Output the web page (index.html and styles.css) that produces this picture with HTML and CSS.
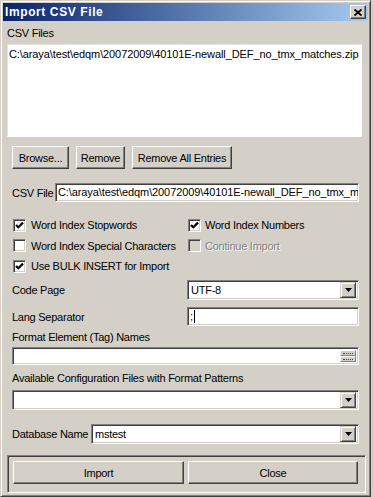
FILE: index.html
```html
<!DOCTYPE html>
<html lang="en">

<head>
    <meta charset="UTF-8">
    <title>Import CSV File</title>
    <link rel="stylesheet" href="styles.css">
</head>

<body>
    <div class="window">
        <div class="titlebar">
            <span class="title">Import CSV File</span>
            <span class="close-btn">
                <svg width="8" height="7" viewBox="0 0 8 7"><path d="M0.5 0.5 L7.5 6.5 M7.5 0.5 L0.5 6.5" stroke="#000" stroke-width="1.8" fill="none"/></svg>
            </span>
        </div>

        <div class="content">
            <div class="label">CSV Files</div>
            <div class="listbox">
                <div class="list-item path-text">C:\araya\test\edqm\20072009\40101E-newall_DEF_no_tmx_matches.zip</div>
            </div>

            <div class="button-row">
                <div class="btn browse-btn">Browse...</div>
                <div class="btn remove-btn">Remove</div>
                <div class="btn remove-all-btn">Remove All Entries</div>
            </div>

            <div class="field-row csv-row">
                <span class="field-label csv-label">CSV File</span>
                <div class="textbox csv-input path-text">C:\araya\test\edqm\20072009\40101E-newall_DEF_no_tmx_matches.zip</div>
            </div>

            <div class="check-grid">
                <div class="check"><span class="box checked"><svg width="9" height="9" viewBox="0 0 9 9"><polyline points="1,4 3.3,6.3 8,1.6" stroke="#000" stroke-width="2.2" fill="none"/></svg></span>Word Index Stopwords</div>
                <div class="check"><span class="box checked"><svg width="9" height="9" viewBox="0 0 9 9"><polyline points="1,4 3.3,6.3 8,1.6" stroke="#000" stroke-width="2.2" fill="none"/></svg></span>Word Index Numbers</div>
                <div class="check"><span class="box"></span>Word Index Special Characters</div>
                <div class="check disabled"><span class="box"></span>Continue Import</div>
                <div class="check"><span class="box checked"><svg width="9" height="9" viewBox="0 0 9 9"><polyline points="1,4 3.3,6.3 8,1.6" stroke="#000" stroke-width="2.2" fill="none"/></svg></span>Use BULK INSERT for Import</div>
            </div>

            <div class="field-row code-row">
                <span class="field-label wide-label">Code Page</span>
                <div class="combo half-combo">
                    <span class="combo-text">UTF-8</span>
                    <span class="arrow-btn"><svg width="7" height="4" viewBox="0 0 7 4"><path d="M0 0 H7 L3.5 4 Z" fill="#000"/></svg></span>
                </div>
            </div>

            <div class="field-row lang-row">
                <span class="field-label wide-label">Lang Separator</span>
                <div class="textbox lang-input">;<span class="caret"></span></div>
            </div>

            <div class="label sub-label format-label">Format Element (Tag) Names</div>
            <div class="textbox format-input">
                <span class="spin">
                    <span class="spin-half"><span class="dots"></span></span>
                    <span class="spin-half"><span class="dots"></span></span>
                </span>
            </div>

            <div class="label sub-label avail-label">Available Configuration Files with Format Patterns</div>
            <div class="combo full-combo">
                <span class="combo-text"></span>
                <span class="arrow-btn"><svg width="7" height="4" viewBox="0 0 7 4"><path d="M0 0 H7 L3.5 4 Z" fill="#000"/></svg></span>
            </div>

            <div class="field-row db-row">
                <span class="field-label db-label">Database Name</span>
                <div class="combo db-combo">
                    <span class="combo-text">mstest</span>
                    <span class="arrow-btn"><svg width="7" height="4" viewBox="0 0 7 4"><path d="M0 0 H7 L3.5 4 Z" fill="#000"/></svg></span>
                </div>
            </div>

            <div class="bottom-panel">
                <div class="btn import-btn">Import</div>
                <div class="btn close-dialog-btn">Close</div>
            </div>
        </div>
    </div>
</body>

</html>
```

FILE: styles.css
```css
body {
    margin: 0;
    background-color: #d4d0c8;
    font-family: "Liberation Sans", Arial, sans-serif;
    font-size: 11px;
    letter-spacing: -0.25px;
    color: #000;
}

.window {
    width: 371px;
    height: 497px;
    box-sizing: border-box;
    border: 1px solid;
    border-color: #d4d0c8 #404040 #404040 #d4d0c8;
    box-shadow: inset 1px 1px #fff, inset -1px -1px #808080;
    padding: 2px;
    background-color: #d4d0c8;
    overflow: hidden;
}

.titlebar {
    height: 18px;
    display: flex;
    align-items: center;
    justify-content: space-between;
    background: linear-gradient(to right, #0a246a, #a6caf0);
    padding: 0 2px 0 2px;
}

.title {
    color: #fff;
    font-weight: bold;
    font-size: 12px;
    letter-spacing: 0.6px;
}

.close-btn {
    width: 16px;
    height: 14px;
    box-sizing: border-box;
    display: flex;
    align-items: center;
    justify-content: center;
    background-color: #d4d0c8;
    border: 1px solid;
    border-color: #fff #404040 #404040 #fff;
    box-shadow: inset -1px -1px #808080;
}

.content {
    padding: 5px 0 0 4px;
}

.label {
    height: 14px;
    line-height: 14px;
    white-space: nowrap;
}

.sub-label {
    margin-left: 5px;
}

.path-text {
    letter-spacing: -0.1px;
}

.listbox {
    margin-top: 4px;
    width: 355px;
    height: 93px;
    box-sizing: border-box;
    background-color: #fff;
    border: 1px solid;
    border-color: #e4e2dc #fff #fff #e4e2dc;
    padding: 3px 0 3px 1px;
}

.list-item {
    line-height: 13px;
    white-space: nowrap;
}

.button-row {
    margin: 9px 0 0 5px;
    display: flex;
    gap: 7px;
}

.btn {
    height: 23px;
    box-sizing: border-box;
    display: flex;
    align-items: center;
    justify-content: center;
    background-color: #d4d0c8;
    border: 1px solid;
    border-color: #fff #404040 #404040 #fff;
    box-shadow: inset -1px -1px #808080;
    white-space: nowrap;
}

.browse-btn { width: 57px; }
.remove-btn { width: 49px; }
.remove-all-btn { width: 100px; }

.field-row {
    margin-left: 5px;
    display: flex;
    align-items: center;
}

.field-label {
    white-space: nowrap;
}

.csv-row { margin-top: 14px; }
.csv-label { width: 43px; }
.wide-label { width: 175px; }
.db-label { width: 79px; }

.textbox,
.combo {
    box-sizing: border-box;
    background-color: #fff;
    border: 1px solid;
    border-color: #808080 #fff #fff #808080;
    box-shadow: inset 1px 1px #404040, inset -1px -1px #d4d0c8;
    white-space: nowrap;
    overflow: hidden;
}

.textbox {
    padding: 0 2px;
    line-height: 17px;
}

.csv-input {
    width: 304px;
    height: 19px;
}

.check-grid {
    margin: 13px 0 0 5px;
    display: grid;
    grid-template-columns: 176px 1fr;
    grid-template-rows: 20px 21px 20px;
}

.check {
    display: flex;
    align-items: center;
    white-space: nowrap;
}

.box {
    width: 13px;
    height: 13px;
    box-sizing: border-box;
    margin: 0 5px 0 1px;
    display: flex;
    align-items: center;
    justify-content: center;
    background-color: #fff;
    border: 1px solid;
    border-color: #808080 #fff #fff #808080;
    box-shadow: inset 1px 1px #404040, inset -1px -1px #d4d0c8;
}

.check:nth-child(even) .box {
    margin-left: 0;
    margin-right: 4px;
}

.check.disabled {
    color: #808080;
    text-shadow: 1px 1px #fff;
}

.check.disabled .box {
    background-color: #d4d0c8;
}

.code-row { margin-top: 4px; }
.lang-row { margin-top: 7px; }

.combo {
    height: 20px;
    display: flex;
    align-items: center;
    padding: 2px;
}

.combo-text {
    flex: 1;
    padding-left: 1px;
    line-height: 16px;
}

.arrow-btn {
    width: 16px;
    height: 16px;
    box-sizing: border-box;
    display: flex;
    align-items: center;
    justify-content: center;
    background-color: #d4d0c8;
    border: 1px solid;
    border-color: #d4d0c8 #404040 #404040 #d4d0c8;
    box-shadow: inset 1px 1px #fff, inset -1px -1px #808080;
}

.half-combo { width: 172px; }

.lang-input {
    width: 172px;
    height: 19px;
    display: flex;
    align-items: center;
}

.caret {
    width: 1px;
    height: 13px;
    margin-left: 1px;
    background-color: #000;
}

.format-label { margin-top: 4px; }

.format-input {
    margin: 3px 0 0 5px;
    width: 347px;
    height: 18px;
    display: flex;
    justify-content: flex-end;
    padding: 2px;
}

.spin {
    width: 16px;
    display: flex;
    flex-direction: column;
}

.spin-half {
    flex: 1;
    box-sizing: border-box;
    display: flex;
    align-items: center;
    justify-content: center;
    background-color: #d4d0c8;
    border: 1px solid;
    border-color: #fff #808080 #808080 #fff;
}

.dots {
    width: 10px;
    border-top: 1px dotted #404040;
}

.avail-label { margin-top: 6px; }

.full-combo {
    margin: 5px 0 0 5px;
    width: 347px;
}

.db-row { margin-top: 14px; }
.db-combo { width: 268px; }

.bottom-panel {
    margin-top: 11px;
    width: 359px;
    height: 38px;
    box-sizing: border-box;
    border: 1px solid;
    border-color: #808080 #fff #fff #808080;
    box-shadow: inset 1px 1px #404040;
    padding: 5px 0 0 5px;
    display: flex;
    gap: 4px;
}

.import-btn { width: 171px; }
.close-dialog-btn { width: 170px; }
```
